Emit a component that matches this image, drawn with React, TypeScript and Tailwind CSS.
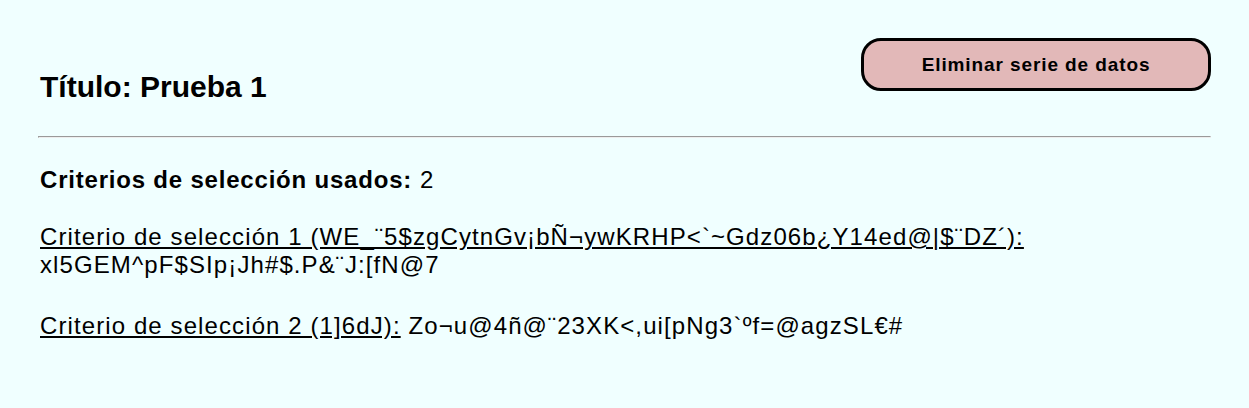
export default function App() {
  return (
    <div
      className="min-h-[408px] bg-[#f0ffff] px-[38px] pt-[38px] text-black"
      style={{ fontFamily: '"Liberation Sans", Arial, sans-serif' }}
    >
      <div className="flex items-start justify-between">
        <h1 className="mt-[31px] pl-[2px] text-[30px] font-bold leading-9">Título: Prueba 1</h1>
        <button className="h-[53px] w-[350px] rounded-[20px] border-[3px] border-black bg-[#e2b8b8] pt-[2px] text-[19px] font-bold tracking-[0.9px]">
          Eliminar serie de datos
        </button>
      </div>

      <hr className="mt-[31px] h-[2px] border border-t-[#9a9a9a] border-l-[#9a9a9a] border-b-[#eeeeee] border-r-[#eeeeee]" />

      <div className="pl-[2px] text-[24px] tracking-[1.1px]">
        <p className="mt-[28px] leading-7">
          <b className="tracking-[0.8px]">Criterios de selección usados:</b> 2
        </p>
        <p className="mt-[29px] leading-7">
          <span className="underline">Criterio de selección 1 (WE_¨5$zgCytnGv¡bÑ¬ywKRHP&lt;`~Gdz06b¿Y14ed@|$¨DZ´):</span>{' '}
          xl5GEM^pF$SIp¡Jh#$.P&amp;¨J:[fN@7
        </p>
        <p className="mt-[33px] leading-7">
          <span className="underline">Criterio de selección 2 (1]6dJ):</span> Zo¬u@4ñ@¨23XK&lt;,ui[pNg3`ºf=@agzSL€#
        </p>
      </div>
    </div>
  )
}
